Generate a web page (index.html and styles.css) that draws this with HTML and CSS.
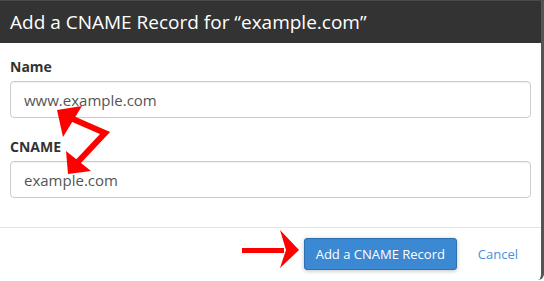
FILE: index.html
```html
<!DOCTYPE html>
<html lang="en">
<head>
    <meta charset="UTF-8">
    <meta name="viewport" content="width=device-width, initial-scale=1.0">
    <title>Add a CNAME Record</title>
    <link rel="stylesheet" href="styles.css">
</head>
<body>
    <div class="modal">
        <div class="modal-header">Add a CNAME Record for “example.com”</div>
        <div class="modal-body">
            <div class="form-group">
                <label for="name">Name</label>
                <input type="text" id="name" class="field" value="www.example.com">
            </div>
            <div class="form-group">
                <label for="cname">CNAME</label>
                <input type="text" id="cname" class="field" value="example.com">
            </div>
        </div>
        <div class="modal-footer">
            <button class="btn-primary">Add a CNAME Record</button>
            <a href="#" class="cancel">Cancel</a>
        </div>

        <!-- red annotation arrows -->
        <svg class="arrows" width="544" height="281" viewBox="0 0 544 281">
            <polyline points="66,116 105,133 75,165" fill="none" stroke="#f00" stroke-width="6" stroke-linejoin="miter"/>
            <polygon points="57,110 82,106 63,137" fill="#f00"/>
            <polygon points="68,174 66,151 91,171" fill="#f00"/>
            <rect x="242" y="248" width="42" height="5" fill="#f00"/>
            <polygon points="280,230 299,250 280,268 286,250" fill="#f00"/>
        </svg>
    </div>
</body>
</html>
```

FILE: styles.css
```css
body {
    margin: 0;
    background: #fff;
    font-family: "Open Sans", sans-serif;
}
.modal {
    position: relative;
    width: 544px;
    height: 280px;
    border-right: 3px solid #555;
    border-top: 1px solid #4a4a4a;
    border-radius: 0 0 6px 0;
    box-sizing: border-box;
    background: #fff;
}
.modal-header {
    background: #333;
    color: #fff;
    font-size: 19px;
    height: 42px;
    line-height: 42px;
    padding-left: 10px;
}
.modal-body {
    padding: 14px 10px 10px 10px;
}
.form-group {
    margin-bottom: 19px;
}
.form-group label {
    display: block;
    font-weight: bold;
    font-size: 14px;
    line-height: 20px;
    color: #333;
    margin-bottom: 4px;
}
.field {
    display: block;
    box-sizing: border-box;
    width: 521px;
    height: 37px;
    padding: 0 13px;
    border: 1px solid #ccc;
    border-radius: 4px;
    box-shadow: inset 0 1px 1px rgba(0, 0, 0, 0.06);
    font-family: "Open Sans", sans-serif;
    font-size: 15px;
    color: #555;
    background: #fff;
}
.modal-footer {
    display: flex;
    justify-content: flex-end;
    align-items: center;
    gap: 21px;
    border-top: 1px solid #e5e5e5;
    padding: 10px 23px 0 0;
}
.btn-primary {
    height: 32px;
    width: 153px;
    border: 1px solid #2d6fb0;
    border-radius: 3px;
    background: #3b88d3;
    color: #fff;
    font-family: "Open Sans", sans-serif;
    font-size: 13px;
    box-shadow: 0 1px 4px rgba(0, 0, 0, 0.25);
    cursor: pointer;
}
.cancel {
    color: #4a90d9;
    font-size: 13px;
    text-decoration: none;
}
.arrows {
    position: absolute;
    left: 0;
    top: -1px;
    pointer-events: none;
}
```
